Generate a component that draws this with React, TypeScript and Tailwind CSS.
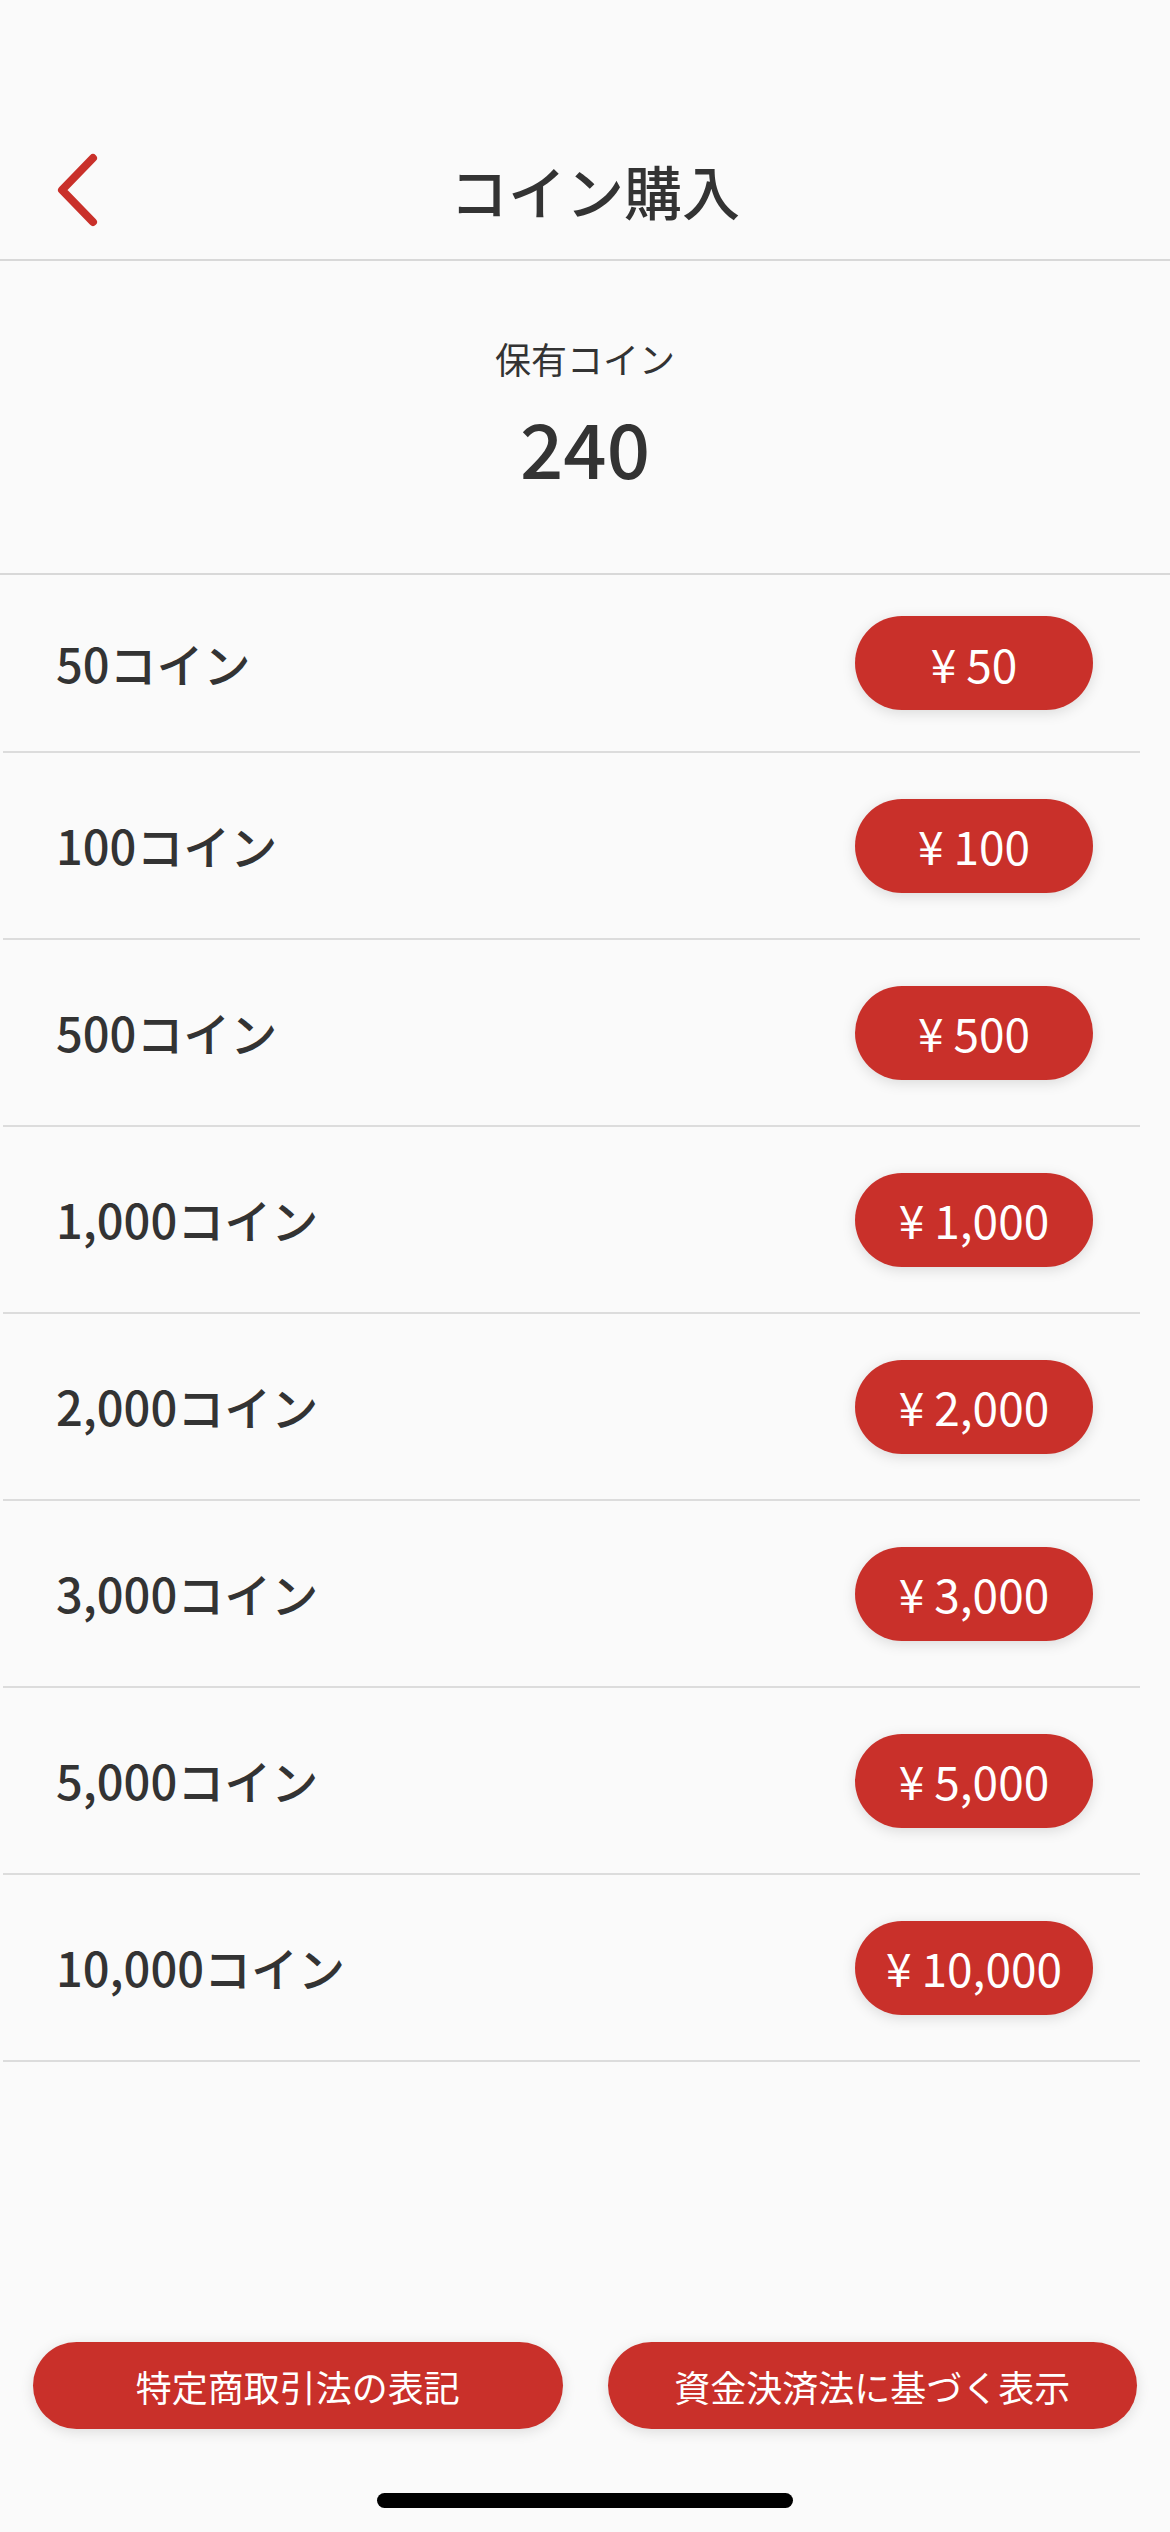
const plans = [
  { coins: '50', price: '50' },
  { coins: '100', price: '100' },
  { coins: '500', price: '500' },
  { coins: '1,000', price: '1,000' },
  { coins: '2,000', price: '2,000' },
  { coins: '3,000', price: '3,000' },
  { coins: '5,000', price: '5,000' },
  { coins: '10,000', price: '10,000' },
]

function BackChevron() {
  return (
    <svg width="60" height="90" viewBox="0 0 60 90" fill="none" aria-hidden>
      <path
        d="M53 13 L22 45 L53 77"
        stroke="#c9302a"
        strokeWidth="8"
        strokeLinecap="round"
        strokeLinejoin="round"
      />
    </svg>
  )
}

function PlanRow({ coins, price, first }: { coins: string; price: string; first: boolean }) {
  return (
    <li
      className={`mr-[30px] ml-[3px] flex items-center justify-between border-b-2 border-[#dcdcdc] pl-[53px] pr-[47px] ${first ? 'h-[178px]' : 'h-[187px]'}`}
    >
      <span className="text-[47px] font-medium text-[#333]">{coins}コイン</span>
      <button
        type="button"
        className="flex h-[94px] w-[238px] items-center justify-center rounded-full bg-[#c9302a] text-[46px] font-normal text-white shadow-[0_3px_14px_rgba(0,0,0,0.13)]"
      >
        <span className="mr-[10px]">¥</span>
        {price}
      </button>
    </li>
  )
}

export default function App() {
  return (
    <div className="flex min-h-[2532px] flex-col bg-[#fafafa] font-['Noto_Sans_CJK_JP','Noto_Sans',sans-serif] text-[#333]">
      <header className="mt-[121px] flex h-[140px] items-center border-b-2 border-[#d8d8d8]">
        <div className="flex w-[160px] items-center pl-[40px]">
          <BackChevron />
        </div>
        <h1 className="flex-1 text-center text-[58px] font-medium leading-none">コイン購入</h1>
        <div className="w-[140px]" />
      </header>

      <section className="flex h-[314px] flex-col items-center border-b-2 border-[#d8d8d8] pt-[79px]">
        <p className="text-[36px] leading-none">保有コイン</p>
        <p className="mt-[32px] text-[76px] font-medium leading-none">240</p>
      </section>

      <ul className="flex flex-col">
        {plans.map((p, i) => (
          <PlanRow key={p.coins} coins={p.coins} price={p.price} first={i === 0} />
        ))}
      </ul>

      <div className="mt-auto flex gap-[45px] px-[33px]">
        <button
          type="button"
          className="flex h-[87px] flex-1 items-center justify-center rounded-full bg-[#c9302a] text-[36px] text-white shadow-[0_3px_14px_rgba(0,0,0,0.12)]"
        >
          特定商取引法の表記
        </button>
        <button
          type="button"
          className="flex h-[87px] flex-1 items-center justify-center rounded-full bg-[#c9302a] text-[36px] text-white shadow-[0_3px_14px_rgba(0,0,0,0.12)]"
        >
          資金決済法に基づく表示
        </button>
      </div>

      <div className="flex justify-center pt-[64px] pb-[24px]">
        <div className="h-[15px] w-[416px] rounded-full bg-black" />
      </div>
    </div>
  )
}
